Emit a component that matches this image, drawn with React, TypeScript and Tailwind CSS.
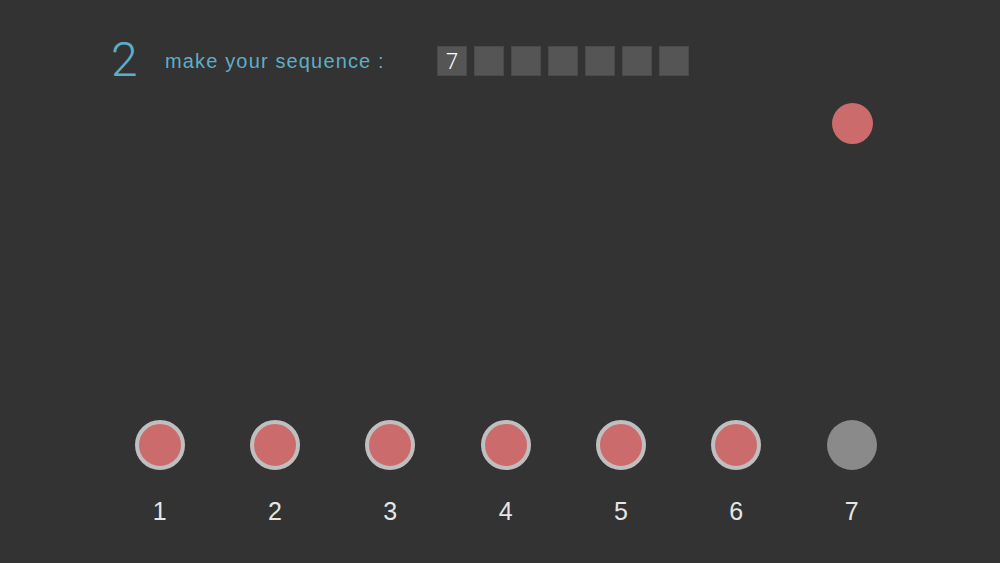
import React from "react";

const Circle = ({ active }: { active: boolean }) =>
  active ? (
    <div className="w-[50px] h-[50px] rounded-full bg-[#cb6b6b] border-[4px] border-[#bfbfbf]" />
  ) : (
    <div className="w-[50px] h-[50px] rounded-full bg-[#8a8a8a]" />
  );

export default function App() {
  const cols = [1, 2, 3, 4, 5, 6, 7];
  return (
    <div className="relative w-[1000px] h-[563px] bg-[#333333] overflow-hidden" style={{ fontFamily: "'Liberation Sans', Arial, sans-serif" }}>
      <div className="flex items-center pt-[36px] pl-[111px]">
        <div className="text-[48px] leading-[48px] font-light text-[#5eaec6] w-[54px]" style={{ fontFamily: "Roboto, 'Liberation Sans', sans-serif", fontWeight: 300 }}>
          2
        </div>
        <div className="text-[20px] text-[#5eaec6] tracking-[1.15px] w-[272px] pt-[2px]">make your sequence :</div>
        <div className="flex gap-[7px] pt-[2px]">
          {cols.map((c, i) => (
            <div key={c} className="w-[30px] h-[30px] bg-[#555555] border border-[#4a4a4a] flex items-center justify-center text-white text-[22px]" style={{ fontFamily: "Roboto, 'Liberation Sans', sans-serif", fontWeight: 300 }}>
              {i === 0 ? "7" : ""}
            </div>
          ))}
        </div>
      </div>

      <div className="absolute left-[832px] top-[103px] w-[41px] h-[41px] rounded-full bg-[#cb6b6b]" />

      <div className="absolute left-[102px] top-[420px] flex">
        {cols.map((c) => (
          <div key={c} className="w-[115.33px] flex flex-col items-center">
            <Circle active={c !== 7} />
            <div className="mt-[26px] text-[25px] leading-[30px] text-[#e6e6e6]">{c}</div>
          </div>
        ))}
      </div>
    </div>
  );
}
